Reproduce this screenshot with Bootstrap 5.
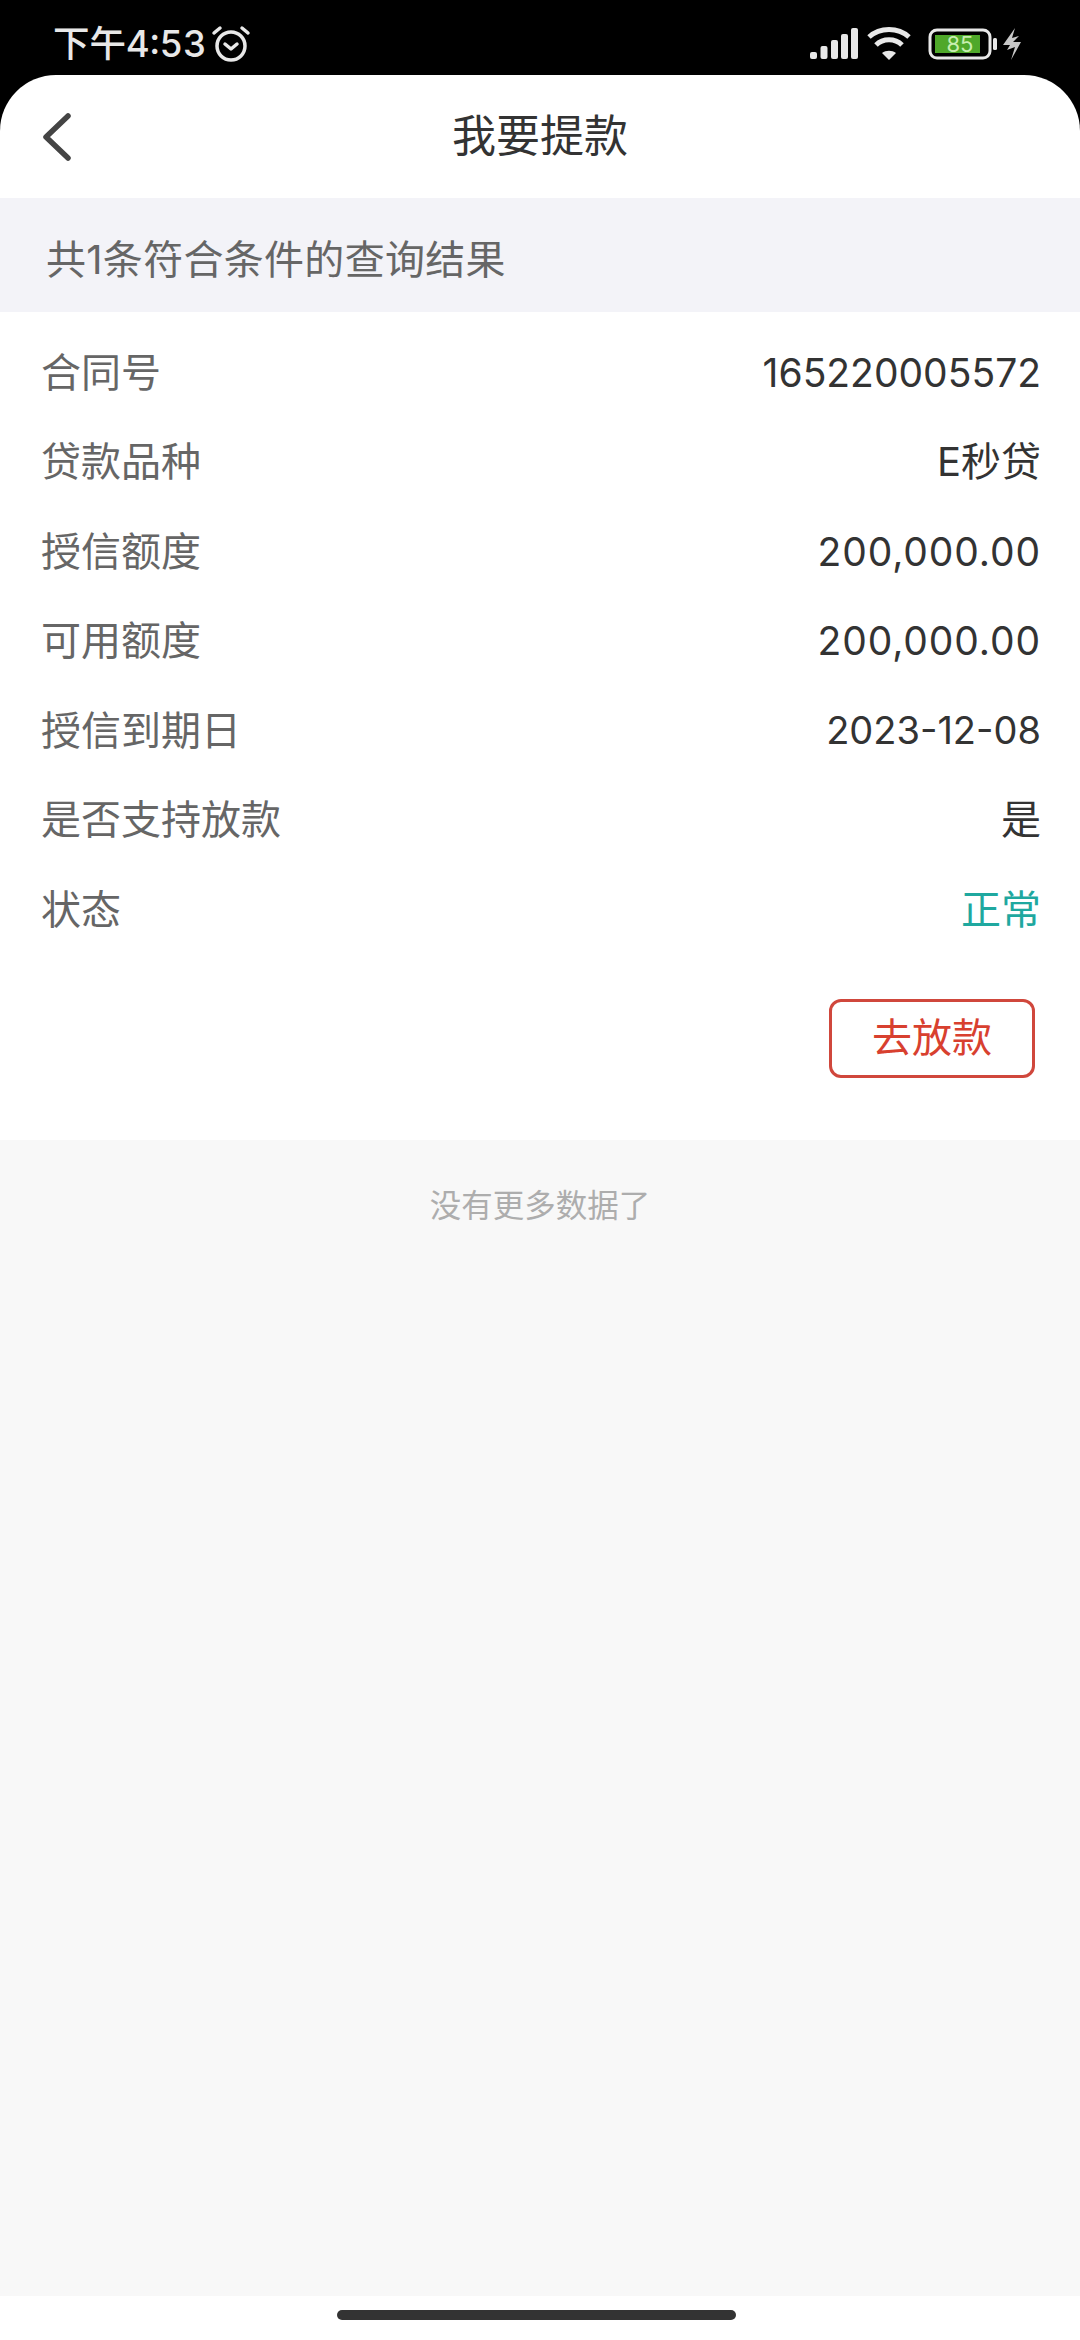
<!DOCTYPE html>
<html lang="zh-CN">
<head>
  <meta charset="UTF-8" />
  <meta name="viewport" content="width=device-width, initial-scale=1" />
  <title>我要提款</title>
  <link href="https://cdn.jsdelivr.net/npm/bootstrap@5.3.0/dist/css/bootstrap.min.css" rel="stylesheet" />
  <style>
    body { background: #000; font-family: Inter, "Noto Sans CJK SC", sans-serif; }
    .screen { width: 1080px; height: 2340px; }
    .status-bar { height: 75px; padding: 13px 58px 0 53px; color: #e8e8e8; }
    .status-time { font-size: 36.5px; line-height: 1; font-weight: 500; font-variant-numeric: tabular-nums; }
    .sheet { border-radius: 56px 56px 0 0; background: #fff; height: 2265px; }
    .title-bar { height: 123px; padding-left: 40px; }
    .title-text { left: 0; right: 0; font-size: 44px; color: #333; text-align: center; line-height: 127px; }
    .result-band { height: 114px; background: #f3f3f8; padding: 10px 0 0 46px; font-size: 40px; letter-spacing: .3px; color: #666; }
    .info-list { padding: 16px 39px 0 41px; height: 828px; }
    .info-row { height: 89.5px; font-size: 40px; }
    .info-label { color: #666; }
    .info-value { color: #333; }
    .info-num { color: #333; font-size: 39px; }
    .info-amount { color: #333; font-size: 39px; letter-spacing: .9px; }
    .info-date { color: #333; font-size: 38px; }
    .info-ok { color: #1fa89f; }
    .draw-btn { width: 206px; height: 79px; margin-top: 44px; margin-right: 6px; border: 3px solid #d0473c; border-radius: 12px; color: #d8402f; font-size: 40px; padding: 0; line-height: 1; background: #fff; }
    .draw-btn:hover { color: #d8402f; border-color: #d0473c; }
    .empty-area { height: 1156px; background: #f8f8f8; padding-top: 43px; color: #adadad; font-size: 31.5px; line-height: 46px; text-align: center; }
    .home-zone { height: 44px; padding-top: 14px; }
    .home-bar { width: 399px; height: 10px; margin-left: 337px; border-radius: 5px; background: #333; }
  </style>
</head>
<body>
  <div class="screen">
    <!-- Status bar -->
    <div class="status-bar d-flex align-items-center justify-content-between">
      <div class="d-flex align-items-center">
        <span class="status-time">下午4:53</span>
        <svg class="ms-1" width="40" height="38" viewBox="0 0 40 38" fill="none" stroke="#e8e8e8" stroke-linecap="round">
          <circle cx="20" cy="21" r="14" stroke-width="3.5" />
          <path d="M14 19l6 5 6-5" stroke-width="3.5" stroke-linejoin="round" />
          <path d="M3 8l6-5M37 8l-6-5" stroke-width="3.5" />
        </svg>
      </div>
      <div class="d-flex align-items-center">
        <svg width="48" height="32" viewBox="0 0 48 32" fill="#e8e8e8">
          <rect x="0" y="24" width="7" height="7" rx="2" />
          <rect x="10.5" y="18" width="7" height="13" rx="2" />
          <rect x="21" y="12" width="7" height="19" rx="2" />
          <rect x="31" y="6" width="7" height="25" rx="2" />
          <rect x="41" y="0" width="7" height="31" rx="2" />
        </svg>
        <svg class="ms-2" width="46" height="36" viewBox="0 0 46 36" fill="none" stroke="#e8e8e8" stroke-width="5">
          <path d="M3 11C14 1 32 1 43 11" />
          <path d="M10 19C17 12 29 12 36 19" />
          <path d="M23 34l-7-7c4-3 10-3 14 0z" fill="#e8e8e8" stroke="none" />
        </svg>
        <svg class="ms-3" width="70" height="32" viewBox="0 0 70 32">
          <rect x="2" y="2" width="60" height="28" rx="7" fill="none" stroke="#e8e8e8" stroke-width="3" />
          <rect x="7" y="7" width="45" height="18" fill="#4fa82a" />
          <rect x="65" y="10" width="4" height="12" rx="1.5" fill="#e8e8e8" />
          <text x="32" y="24" text-anchor="middle" font-family="Inter, sans-serif" font-size="22" fill="#c8efb0">85</text>
        </svg>
        <svg class="ms-1" width="20" height="32" viewBox="0 0 20 32" fill="#c8c8c8">
          <path d="M13 0L1 17h7l-3 5 8-3 -4 13 10-18h-8l6-6-7 2z" />
        </svg>
      </div>
    </div>

    <div class="sheet overflow-hidden">
      <!-- Title -->
      <div class="title-bar position-relative d-flex align-items-center">
        <div class="title-text position-absolute">我要提款</div>
        <svg width="34" height="50" viewBox="0 0 34 50" fill="none" stroke="#444" stroke-width="5.5" stroke-linecap="round" stroke-linejoin="round">
          <path d="M28 4L6 25l22 21" />
        </svg>
      </div>

      <div class="result-band d-flex align-items-center">共1条符合条件的查询结果</div>

      <!-- Contract info -->
      <div class="info-list">
        <div class="info-row d-flex justify-content-between align-items-center"><span class="info-label">合同号</span><span class="info-num">165220005572</span></div>
        <div class="info-row d-flex justify-content-between align-items-center"><span class="info-label">贷款品种</span><span class="info-value">E秒贷</span></div>
        <div class="info-row d-flex justify-content-between align-items-center"><span class="info-label">授信额度</span><span class="info-amount">200,000.00</span></div>
        <div class="info-row d-flex justify-content-between align-items-center"><span class="info-label">可用额度</span><span class="info-amount">200,000.00</span></div>
        <div class="info-row d-flex justify-content-between align-items-center"><span class="info-label">授信到期日</span><span class="info-date">2023-12-08</span></div>
        <div class="info-row d-flex justify-content-between align-items-center"><span class="info-label">是否支持放款</span><span class="info-value">是</span></div>
        <div class="info-row d-flex justify-content-between align-items-center"><span class="info-label">状态</span><span class="info-ok">正常</span></div>
        <div class="d-flex justify-content-end">
          <button type="button" class="btn draw-btn">去放款</button>
        </div>
      </div>

      <div class="empty-area">没有更多数据了</div>
      <div class="home-zone"><div class="home-bar"></div></div>
    </div>
  </div>
  <script src="https://cdn.jsdelivr.net/npm/bootstrap@5.3.0/dist/js/bootstrap.bundle.min.js"></script>
</body>
</html>
